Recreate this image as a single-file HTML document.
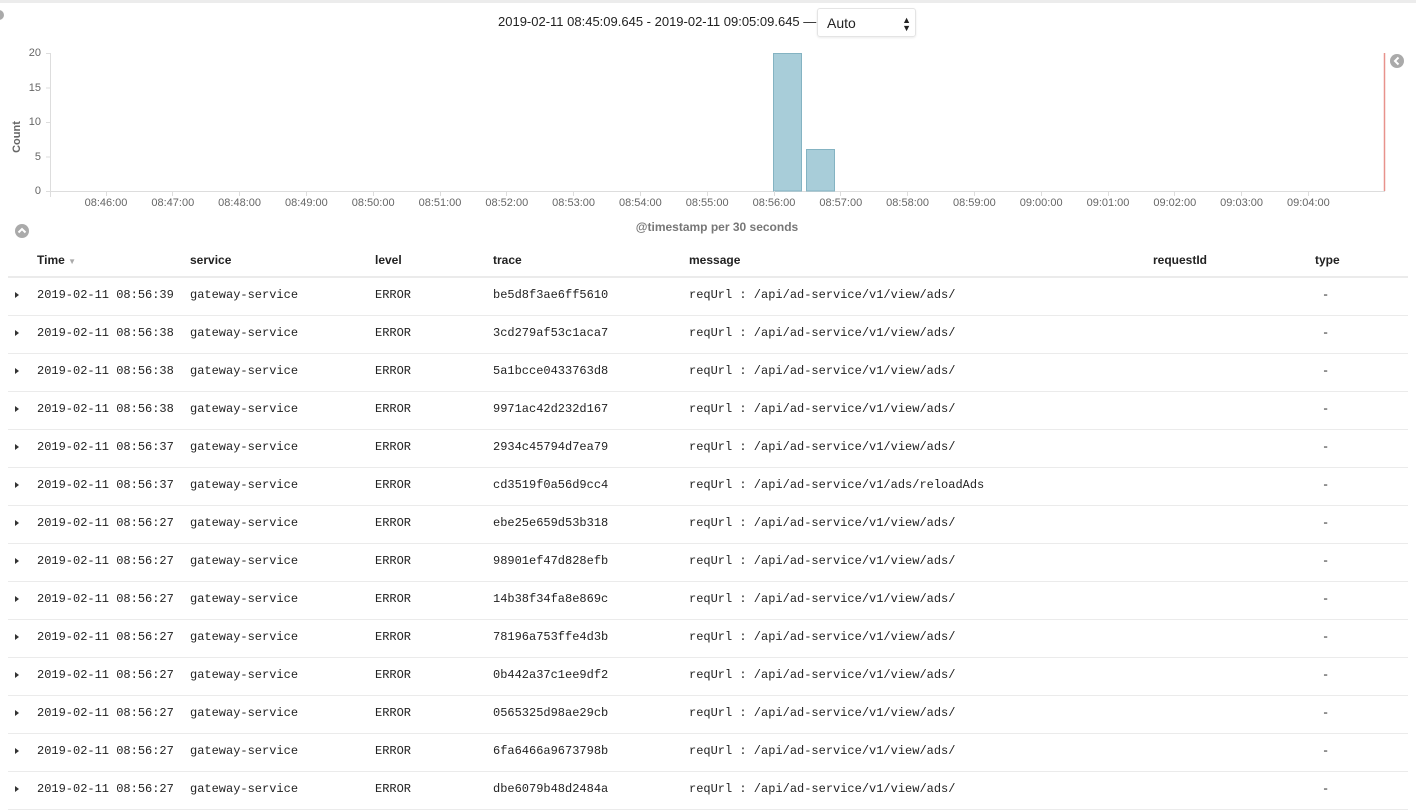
<!DOCTYPE html>
<html><head><meta charset="utf-8"><style>
body{margin:0;width:1416px;height:812px;background:#fff;position:relative;overflow:hidden;font-family:"Liberation Sans",sans-serif;color:#333}
.a{position:absolute;white-space:nowrap}
.topbar{position:absolute;left:0;top:0;width:1416px;height:3px;background:#ececec}
.range{left:498px;top:14px;font-size:13px;color:#222}
.sel{left:817px;top:8px;width:99px;height:29px;border:1px solid #e4e4e4;border-radius:3px;box-shadow:0 1px 2px rgba(0,0,0,.08);font-size:14px;line-height:29px;box-sizing:border-box;padding-left:9px;color:#222}
.yl{font-size:11px;color:#666;text-align:right;width:30px;left:11px}
.xl{font-size:11px;color:#666;width:60px;text-align:center}
.m{font-family:"Liberation Mono",monospace;font-size:12px;color:#222}
.h{font-size:12px;font-weight:bold;color:#222;top:253px}
.sep{position:absolute;left:8px;width:1400px;height:1px;background:#ebebeb}
.tri{position:absolute;left:15px;width:0;height:0;border-top:3.5px solid transparent;border-bottom:3.5px solid transparent;border-left:4px solid #333}
</style></head><body>
<div class="topbar"></div>
<div class="a range">2019-02-11 08:45:09.645 - 2019-02-11 09:05:09.645 —</div>
<div class="a sel">Auto<span style="position:absolute;right:4px;font-size:9px;line-height:8px;top:7px">▲<br>▼</span></div>
<div class="a" style="left:-6px;top:10px;width:10px;height:10px;border-radius:5px;background:#aaa"></div>
<svg class="a" style="left:0;top:0" width="1416" height="240">
<line x1="50.5" y1="53" x2="50.5" y2="197" stroke="#ddd"/>
<line x1="50" y1="191.5" x2="1385" y2="191.5" stroke="#ddd"/>
<g stroke="#ddd"><line x1="46" x2="50" y1="53.5" y2="53.5"/><line x1="46" x2="50" y1="88" y2="88"/><line x1="46" x2="50" y1="122.5" y2="122.5"/><line x1="46" x2="50" y1="157" y2="157"/><line x1="46" x2="50" y1="191.5" y2="191.5"/></g>
<rect x="773.5" y="53.5" width="28" height="137.5" fill="#a8cdd9" stroke="#84b3c2"/>
<rect x="806.5" y="149.5" width="28" height="41.5" fill="#a8cdd9" stroke="#84b3c2"/>
<line x1="1384.5" y1="53" x2="1384.5" y2="191" stroke="#e8928c" stroke-width="1.5"/>
<circle cx="1397" cy="61" r="7" fill="#aaa"/><path d="M1398.5 57.5 L1395 61 L1398.5 64.5" stroke="#fff" stroke-width="2" fill="none"/>
<circle cx="22" cy="231" r="7" fill="#aaa"/><path d="M18.5 232.5 L22 229 L25.5 232.5" stroke="#fff" stroke-width="2" fill="none"/>
<text x="20" y="137" transform="rotate(-90 20 137)" font-family="Liberation Sans" font-size="11" font-weight="bold" fill="#666" text-anchor="middle">Count</text>
<text x="717" y="231" font-family="Liberation Sans" font-size="12" font-weight="bold" fill="#777" text-anchor="middle">@timestamp per 30 seconds</text>
</svg>
<div class="a yl" style="top:47px">20</div>
<div class="a yl" style="top:82px">15</div>
<div class="a yl" style="top:116px">10</div>
<div class="a yl" style="top:151px">5</div>
<div class="a yl" style="top:185px">0</div>
<div id="x"></div>
<div class="a h" style="left:37px">Time <span style="color:#aaa;font-size:8px">▼</span></div>
<div class="a h" style="left:190px">service</div>
<div class="a h" style="left:375px">level</div>
<div class="a h" style="left:493px">trace</div>
<div class="a h" style="left:689px">message</div>
<div class="a h" style="left:1153px">requestId</div>
<div class="a h" style="left:1315px">type</div>
<div class="sep" style="top:276px;height:2px"></div>
<div id="rows"></div>
<script>
var xs=["08:46:00","08:47:00","08:48:00","08:49:00","08:50:00","08:51:00","08:52:00","08:53:00","08:54:00","08:55:00","08:56:00","08:57:00","08:58:00","08:59:00","09:00:00","09:01:00","09:02:00","09:03:00","09:04:00"];
var h="";xs.forEach(function(t,i){var x=106+i*66.8;h+='<div class="a" style="left:'+(x-0.5)+'px;top:191px;width:1px;height:5px;background:#ddd"></div><div class="a xl" style="left:'+(x-30)+'px;top:197px">'+t+'</div>';});
document.getElementById("x").innerHTML=h;
var r=[["39","be5d8f3ae6ff5610","view/ads/"],["38","3cd279af53c1aca7","view/ads/"],["38","5a1bcce0433763d8","view/ads/"],["38","9971ac42d232d167","view/ads/"],["37","2934c45794d7ea79","view/ads/"],["37","cd3519f0a56d9cc4","ads/reloadAds"],["27","ebe25e659d53b318","view/ads/"],["27","98901ef47d828efb","view/ads/"],["27","14b38f34fa8e869c","view/ads/"],["27","78196a753ffe4d3b","view/ads/"],["27","0b442a37c1ee9df2","view/ads/"],["27","0565325d98ae29cb","view/ads/"],["27","6fa6466a9673798b","view/ads/"],["27","dbe6079b48d2484a","view/ads/"]];
h="";r.forEach(function(d,i){var y=288+i*38;
h+='<div class="tri" style="top:'+(y+4)+'px"></div><div class="a m" style="left:37px;top:'+y+'px">2019-02-11 08:56:'+d[0]+'</div><div class="a m" style="left:190px;top:'+y+'px">gateway-service</div><div class="a m" style="left:375px;top:'+y+'px">ERROR</div><div class="a m" style="left:493px;top:'+y+'px">'+d[1]+'</div><div class="a m" style="left:689px;top:'+y+'px">reqUrl : /api/ad-service/v1/'+d[2]+'</div><div class="a m" style="left:1322px;top:'+y+'px">-</div><div class="sep" style="top:'+(y+27)+'px"></div>';});
document.getElementById("rows").innerHTML=h;
</script>
</body></html>
